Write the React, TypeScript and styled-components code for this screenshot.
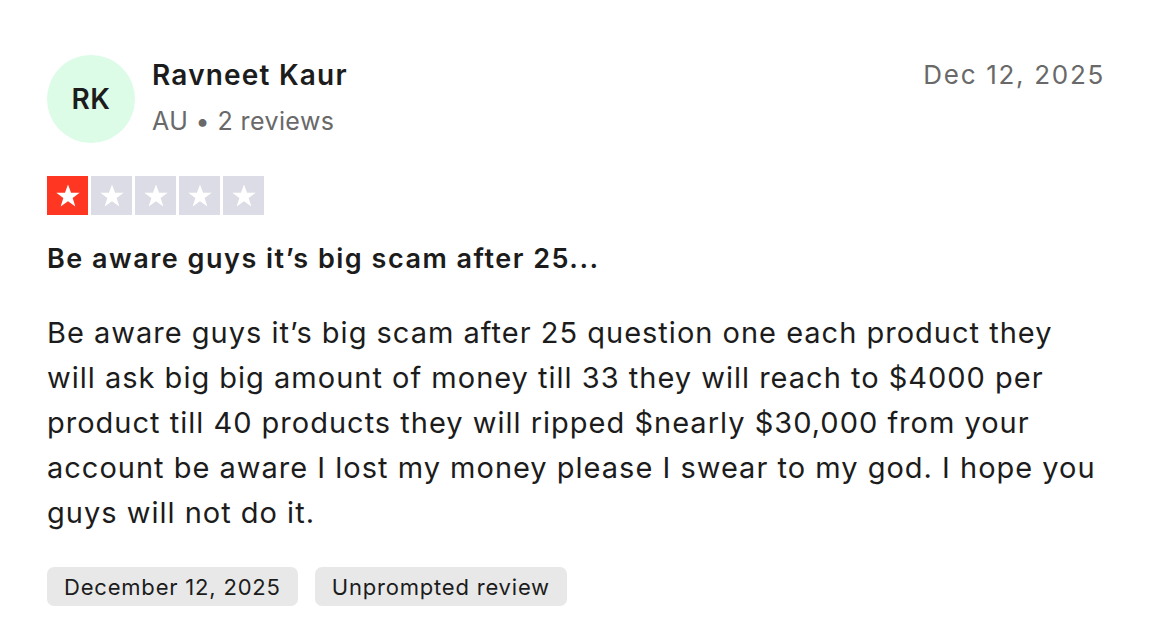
import React from 'react'
import styled, { createGlobalStyle } from 'styled-components'

const GlobalStyle = createGlobalStyle`
  body {
    margin: 0;
    background: #ffffff;
    font-family: Inter, "Noto Sans", Arial, sans-serif;
    color: #1c1c1c;
  }
`

const Card = styled.article`
  padding: 55px 45px 0 47px;
`

const Header = styled.header`
  display: flex;
  align-items: flex-start;
`

const Avatar = styled.div`
  width: 88px;
  height: 88px;
  border-radius: 50%;
  background: #dcfce7;
  display: flex;
  align-items: center;
  justify-content: center;
  font-size: 28px;
  font-weight: 600;
  letter-spacing: 0.5px;
  color: #1c1c1c;
  flex-shrink: 0;
`

const Author = styled.div`
  margin-left: 17px;
  flex: 1;
  display: flex;
  flex-direction: column;
  gap: 12px;
  padding-top: 2px;
`

const Name = styled.span`
  font-size: 28px;
  font-weight: 600;
  letter-spacing: 1.2px;
  line-height: 36px;
`

const Meta = styled.span`
  font-size: 25px;
  letter-spacing: 0.4px;
  color: #696969;
  line-height: 32px;
`

const PostedAt = styled.time`
  font-size: 26px;
  color: #696969;
  letter-spacing: 1.7px;
  line-height: 36px;
  padding-top: 2px;
`

const Stars = styled.div`
  display: flex;
  gap: 3px;
  margin-top: 33px;
`

const StarBox = styled.div<{ $filled: boolean }>`
  width: 41px;
  height: 39px;
  background: ${(p) => (p.$filled ? '#ff3722' : '#dcdce6')};
  display: flex;
  align-items: center;
  justify-content: center;
`

const Title = styled.h2`
  margin: 28px 0 0;
  font-size: 27px;
  font-weight: 600;
  letter-spacing: 1.5px;
  line-height: 32px;
`

const Body = styled.p`
  margin: 35px 0 0;
  font-size: 29px;
  letter-spacing: 1px;
  line-height: 45px;
  color: #1c1c1c;
`

const Tags = styled.div`
  display: flex;
  gap: 17px;
  margin-top: 32px;
`

const Tag = styled.span`
  background: #e8e8e8;
  border-radius: 7px;
  padding: 0 17px;
  height: 39px;
  display: flex;
  align-items: center;
  font-size: 22px;
  letter-spacing: 0.8px;
  color: #1c1c1c;
`

const Star = () => (
  <svg width="28" height="28" viewBox="0 0 24 24">
    <path
      d="M12 2.2l2.6 7.1h7.4l-6 4.5 2.3 7.3L12 16.6l-6.3 4.5 2.3-7.3-6-4.5h7.4z"
      fill="#ffffff"
    />
  </svg>
)

const rating = 1

export default function App() {
  return (
    <>
      <GlobalStyle />
      <Card>
        <Header>
          <Avatar>RK</Avatar>
          <Author>
            <Name>Ravneet Kaur</Name>
            <Meta>AU • 2 reviews</Meta>
          </Author>
          <PostedAt>Dec 12, 2025</PostedAt>
        </Header>
        <Stars>
          {[1, 2, 3, 4, 5].map((n) => (
            <StarBox key={n} $filled={n <= rating}>
              <Star />
            </StarBox>
          ))}
        </Stars>
        <Title>Be aware guys it’s big scam after 25...</Title>
        <Body>
          Be aware guys it’s big scam after 25 question one each product they
          will ask big big amount of money till 33 they will reach to $4000 per
          product till 40 products they will ripped $nearly $30,000 from your
          account be aware I lost my money please I swear to my god. I hope you
          guys will not do it.
        </Body>
        <Tags>
          <Tag>December 12, 2025</Tag>
          <Tag>Unprompted review</Tag>
        </Tags>
      </Card>
    </>
  )
}
